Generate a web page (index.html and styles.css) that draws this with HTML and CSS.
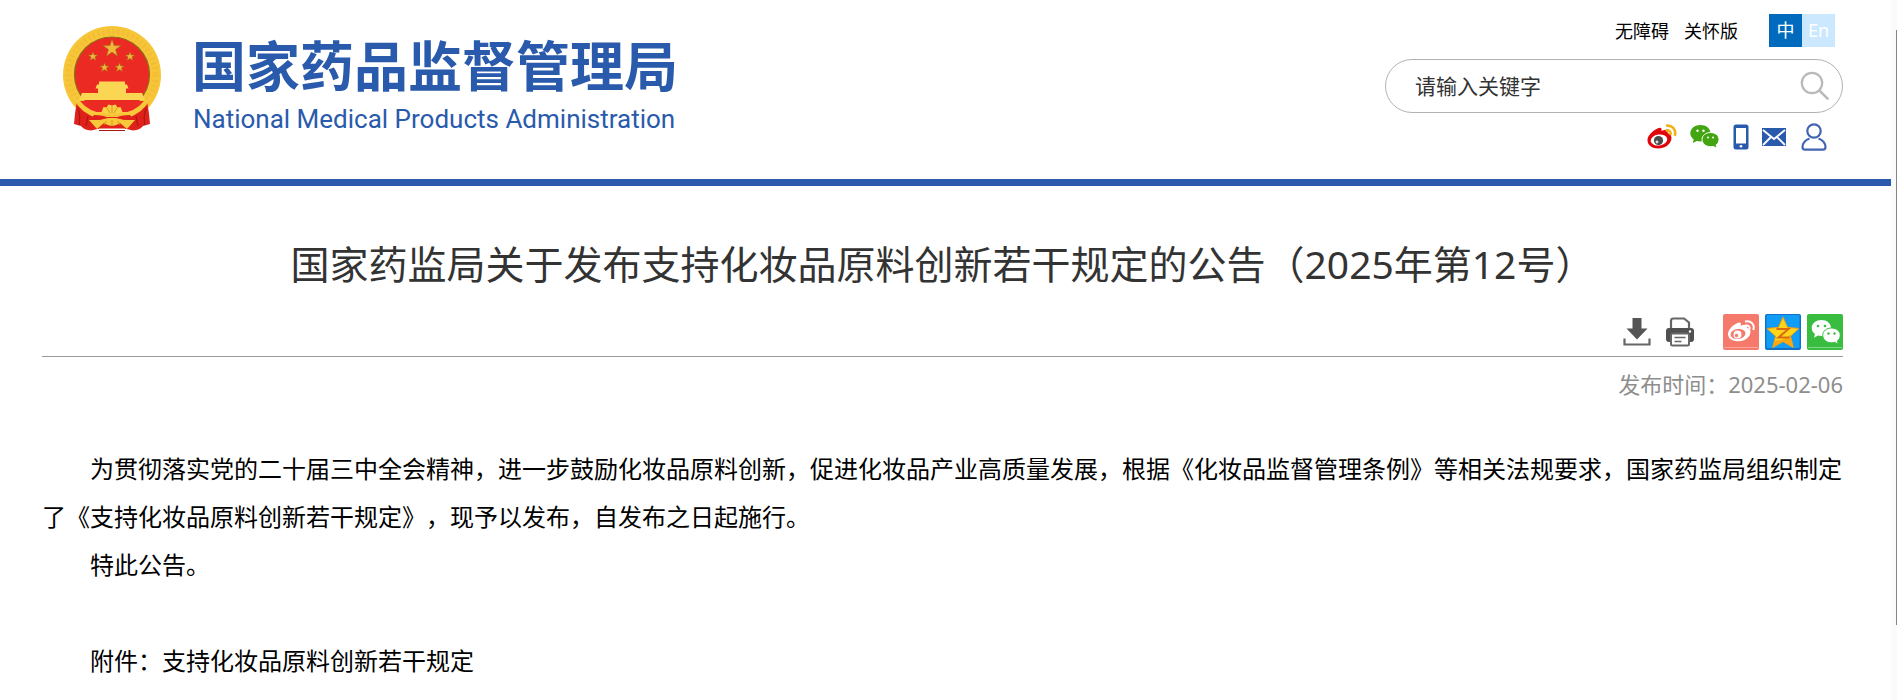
FILE: index.html
```
<!DOCTYPE html>
<html lang="zh-CN">
<head>
    <meta charset="UTF-8">
    <meta name="viewport" content="width=device-width, initial-scale=1.0">
    <title>国家药监局关于发布支持化妆品原料创新若干规定的公告(2025年第12号)</title>
    <link rel="stylesheet" href="styles.css">
</head>
<body>
    <div class="page">
        <header class="header">
            <a class="logo" href="#">
                <svg class="emblem" viewBox="0 0 98 106" aria-hidden="true">
                    <circle cx="49" cy="49" r="49" fill="#f7c638"/>
                    <circle cx="49" cy="49" r="43.500" fill="none" stroke="#e8a428" stroke-width="6" stroke-dasharray="2 3" opacity=".25"/>
                    <circle cx="49" cy="48.500" r="37.500" fill="#ec2a24" stroke="#8f6a16" stroke-width="1.200"/>
                    <g fill="#f0b83a" stroke="#a8701a" stroke-width=".6">
                        <path d="M49 13.500l2.100 6.100h6.900l-5.500 4 2 6.400-5.500-3.900-5.500 3.900 2-6.400-5.500-4h6.900z"/>
                        <path d="M30 26l1.200 3h3.300l-2.600 2 1 3.200-2.900-1.800-2.900 1.800 1-3.200-2.600-2h3.300z"/>
                        <path d="M67 26l1.200 3h3.300l-2.600 2 1 3.200-2.900-1.800-2.900 1.800 1-3.200-2.600-2h3.300z"/>
                        <path d="M41.500 37l1.200 3h3.300l-2.600 2 1 3.200-2.900-1.800-2.900 1.800 1-3.200-2.600-2h3.300z"/>
                        <path d="M56.500 37l1.200 3h3.300l-2.600 2 1 3.200-2.900-1.800-2.900 1.800 1-3.200-2.600-2h3.300z"/>
                    </g>
                    <path fill="#fbd653" d="M36 55.500h26v3h-26zM34 58.500h30l1.500 4h-33zM35 62.500h28v4.500h-28zM19 67h60l3 7h-66z"/>
                    <path fill="#ec2a24" d="M17 75h64q-4 7-12 11h-40q-8-4-12-11z"/>
                    <!-- ribbons -->
                    <path fill="#e0211b" d="M14 75q5 10 20 16h30q15-6 20-16 2 10 3 23l-7 2q-3 4-10 4.500l-9-2h-24l-9 2q-7-.5-10-4.500l-7-2q1-13 3-23z"/>
                    <path fill="none" stroke="#a91814" stroke-width="1.200" d="M15 82q3 10 1 17M83 82q-3 10-1 17M25 90l-2 10M73 90l2 10M36 104.500h26"/>
                    <!-- wheat stalks and gear -->
                    <path fill="#f7c93a" d="M9 69q4 4 8 6 9 11 23 12l-2 5h22l-2-5q14-1 23-12 4-2 8-6-5 13-16 19-6 4-12 4l2 2h9l-8 9-7-6q-8 6-16 0l-7 6-8-9h9l2-2q-6 0-12-4-11-6-16-19z"/>
                    <path fill="#f9cf46" d="M38.500 86l2-5 3 .5 2-3 3.500 1 3.500-1 2 3 3-.5 2 5-3.500 1.500h-14z"/>
                    <path fill="#e0211b" d="M31 89q10 0 14 3l-8 2-9-1zM67 89q-10 0-14 3l8 2 9-1z"/>
                    <path fill="none" stroke="#db981d" d="M44 82l3 5M54 82l-3 5M49 80v7M43 95l-2 4M49 94v6M55 95l2 4"/>
                </svg>
                <span class="logo-text">
                    <span class="logo-cn">国家药品监督管理局</span>
                    <span class="logo-en">National Medical Products Administration</span>
                </span>
            </a>
            <div class="tools">
                <nav class="top-links">
                    <a href="#">无障碍</a>
                    <a href="#">关怀版</a>
                    <span class="lang">
                        <a class="lang-cn" href="#">中</a><a class="lang-en" href="#">En</a>
                    </span>
                </nav>
                <form class="search">
                    <input type="text" placeholder="请输入关键字" aria-label="请输入关键字">
                    <button type="button" aria-label="搜索">
                        <svg width="30" height="30" viewBox="0 0 30 30" fill="none" stroke="#b9b9b9" stroke-width="2.200">
                            <circle cx="12" cy="12" r="10.200"/>
                            <path stroke-width="2.600" d="M19.300 19.300l9 9"/>
                        </svg>
                    </button>
                </form>
                <div class="social">
                    <a href="#" aria-label="微博">
                        <svg width="30" height="26" viewBox="0 0 30 26">
                            <path fill="#e0050b" d="M10.500 4.500c3-1.500 4.500-.5 4 2.500 3.500-1.500 7-1.300 6.200 2.300 3 .8 4.300 3 3.600 6.200-1 5-6.500 9-13 9-6 0-10.800-3-10.800-8.500 0-4 4.500-9 10-11.500z"/>
                            <ellipse cx="12" cy="16" rx="8.300" ry="5.500" fill="#fff" transform="rotate(-8 12 16)"/>
                            <circle cx="11.500" cy="16.500" r="4.600" fill="#4a4a4a"/>
                            <circle cx="10" cy="18" r="1.400" fill="#ddd"/>
                            <path fill="none" stroke="#f0b219" stroke-width="2.600" d="M19 1.800c6-1.200 10.500 3.500 8.800 10M18.500 6.500c4-.7 5.800 1.500 4.800 4.500"/>
                        </svg>
                    </a>
                    <a href="#" aria-label="微信">
                        <svg width="30" height="26" viewBox="0 0 30 26">
                            <path fill="#43a512" d="M10.500 1c5.500 0 10 3.500 10 8.300S16 17.500 10.500 17.500c-1.500 0-2.500-.2-3.700-.5l-4 2 .9-3.600C1.500 13.800.3 11.700.3 9.300.3 4.500 5 1 10.500 1z"/>
                            <path fill="#43a512" stroke="#fff" d="M20.500 8.500c4.700 0 8.500 3 8.500 7 0 2.200-1 4-2.800 5.300l.7 3.500-3.600-1.900c-.9.200-1.800.3-2.800.3-4.700 0-8.500-3.200-8.500-7.200s3.800-7 8.500-7z"/>
                            <g fill="#fff"><circle cx="7.500" cy="6.800" r="1.200"/><circle cx="13.500" cy="6.800" r="1.200"/><circle cx="18" cy="13.500" r="1"/><circle cx="23" cy="13.500" r="1"/></g>
                        </svg>
                    </a>
                    <a href="#" aria-label="手机">
                        <svg width="16" height="26" viewBox="0 0 16 26">
                            <rect x=".5" y=".5" width="15" height="25" rx="2.500" fill="#295aac"/>
                            <path fill="#fff" d="M3 4h10v15.500h-10z"/>
                            <circle cx="8" cy="22.300" r="1.300" fill="#fff"/>
                        </svg>
                    </a>
                    <a href="#" aria-label="邮箱">
                        <svg width="24" height="18" viewBox="0 0 24 18">
                            <path fill="#295aac" d="M0 0h24v18h-24z"/>
                            <path fill="none" stroke="#fff" stroke-width="1.800" d="M1 2l11 9 11-9M1 17l8-8M23 17l-8-8"/>
                        </svg>
                    </a>
                    <a href="#" aria-label="用户">
                        <svg width="28" height="28" viewBox="-2 0 28 28" fill="none" stroke="#4463b2" stroke-width="2.200">
                            <circle cx="13" cy="8" r="6.700"/>
                            <path d="M8.500 15.500c-4 1.500-6.800 4-7 8.500 0 1.800.8 2.700 2.500 2.700h18c1.700 0 2.500-.9 2.500-2.700-.2-4.500-3-7-7-8.500"/>
                        </svg>
                    </a>
                </div>
            </div>
        </header>

        <main class="article">
            <h1>国家药监局关于发布支持化妆品原料创新若干规定的公告（2025年第12号）</h1>
            <div class="actions">
                <button type="button" aria-label="下载">
                    <svg width="28" height="28" viewBox="0 0 28 28">
                        <path fill="#555" d="M9.500 0h9v10.500h6l-10.500 11-10.500-11h6z"/>
                        <path fill="none" stroke="#666" stroke-width="2.200" d="M1.500 20.500v6h25v-6"/>
                    </svg>
                </button>
                <button type="button" aria-label="打印">
                    <svg width="30" height="30" viewBox="0 0 30 30">
                        <path fill="none" stroke="#666" stroke-width="2.200" d="M6 11v-7q0-2.500 2.500-2.500h10.500l5 4v5.500"/>
                        <rect x="1" y="11" width="28" height="14" rx="3" fill="#505050"/>
                        <circle cx="25" cy="14.500" r="1.200" fill="#fff"/>
                        <rect x="6" y="16.500" width="18" height="12" rx="1.500" fill="#fff" stroke="#666" stroke-width="2"/>
                        <path stroke="#666" stroke-width="1.600" d="M9.500 20.500h11M9.500 24.500h7"/>
                    </svg>
                </button>
                <div class="share">
                    <a href="#" aria-label="分享到微博">
                        <svg width="36" height="36" viewBox="0 0 36 36">
                            <rect width="36" height="36" rx="2" fill="#f67a6b"/>
                            <path stroke="#fba79c" d="M1 33.500h34"/>
                            <path fill="#fff" d="M13.500 9.500c3.500-2 5-.8 4.300 2.200 4-1.600 7-1.200 6.200 2 3 1 4 3 3.300 5.500-1 4.500-6 8-12 8-5.500 0-10.300-2.500-10.300-7 0-3.700 4-8.700 8.500-10.700z"/>
                            <ellipse cx="15" cy="20" rx="7.500" ry="5" fill="#f67a6b" transform="rotate(-8 15 20)"/>
                            <circle cx="14.500" cy="20.500" r="4" fill="#fff"/>
                            <circle cx="13.500" cy="21.500" r="1.700" fill="#f67a6b"/>
                            <path fill="none" stroke="#fff" stroke-width="2" d="M22 7.500c6-1.500 10 3 8.300 8.500M22.500 11.500c3.200-.6 4.800 1.500 4 4"/>
                        </svg>
                    </a>
                    <a href="#" aria-label="分享到QQ空间">
                        <svg width="36" height="36" viewBox="0 0 36 36">
                            <rect width="36" height="36" rx="2" fill="#1470c4"/>
                            <rect x="1.500" y="1" width="33" height="33" rx="1" fill="#0f9df5"/>
                            <path fill="#ffd61a" stroke="#f09a10" d="M18 3l4.500 10.300 11.500 1.200-8.500 7.700 2.800 11.300-10.300-6-10.300 6 2.800-11.300-8.500-7.700 11.500-1.200z"/>
                            <path fill="#f7a813" d="M26 20l-.5 2.200 2.800 11.300-10.300-6-10.300 6 2-7q9 1 16.300-6.500z"/>
                            <path fill="none" stroke="#dc6a10" stroke-width="2" d="M11.500 15h12l-10 8.500h11"/>
                        </svg>
                    </a>
                    <a href="#" aria-label="分享到微信">
                        <svg width="36" height="36" viewBox="0 0 36 36">
                            <rect width="36" height="36" rx="2" fill="#38bd41"/>
                            <path stroke="#7fda86" d="M1 33.500h34"/>
                            <path fill="#fff" d="M14.500 6c5.300 0 9.500 3.500 9.500 8s-4.200 8-9.500 8c-1.300 0-2.300-.2-3.500-.5l-4 2.300 1-3.800c-2-1.500-3.300-3.500-3.300-6 0-4.500 4.500-8 9.800-8z"/>
                            <path fill="#fff" stroke="#38bd41" d="M24.500 14c5 0 8.800 3.200 8.800 7.300 0 2.300-1.200 4.200-2.800 5.500l.7 3.500-3.500-2c-1 .3-2 .5-3.200.5-5 0-8.800-3.300-8.800-7.500s3.800-7.300 8.800-7.300z"/>
                            <g fill="#38bd41"><circle cx="11" cy="12" r="1.300"/><circle cx="18" cy="12" r="1.300"/><circle cx="21.500" cy="19.500" r="1.200"/><circle cx="27.500" cy="19.500" r="1.200"/></g>
                        </svg>
                    </a>
                </div>
            </div>
            <p class="date">发布时间：2025-02-06</p>
            <div class="content">
                <p>为贯彻落实党的二十届三中全会精神，进一步鼓励化妆品原料创新，促进化妆品产业高质量发展，根据《化妆品监督管理条例》等相关法规要求，国家药监局组织制定了《支持化妆品原料创新若干规定》，现予以发布，自发布之日起施行。</p>
                <p>特此公告。</p>
                <p class="attachment">附件：<a href="#">支持化妆品原料创新若干规定</a></p>
            </div>
        </main>
    </div>
    <div class="scroll-track">
        <div class="scroll-thumb"></div>
    </div>
</body>
</html>
```
FILE: styles.css
```
* {
    box-sizing: border-box;
}
body {
    margin: 0;
    display: flex;
    min-height: 100vh;
    font-family: "Noto Sans", "Noto Sans CJK SC", sans-serif;
    text-spacing-trim: space-all;
    color: #000;
    background-color: #fff;
}
a {
    color: inherit;
    text-decoration: none;
}
svg {
    display: block;
}
button {
    padding: 0;
    border: 0;
    background: none;
    cursor: pointer;
}
.page {
    flex: 1;
    min-width: 0;
}

/* header */
.header {
    display: flex;
    justify-content: space-between;
    align-items: flex-start;
    height: 186px;
    padding: 14px 48px 0 63px;
    border-bottom: 7px solid #295aac;
}
.logo {
    display: flex;
    gap: 31px;
    padding-top: 12px;
    color: #295aac;
}
.emblem {
    width: 98px;
    height: 106px;
}
.logo-text {
    display: flex;
    flex-direction: column;
}
.logo-cn {
    font-size: 54px;
    font-weight: bold;
    line-height: 80px;
}
.logo-en {
    padding-left: 1px;
    font-family: Roboto, "Liberation Sans", sans-serif;
    font-size: 26px;
    line-height: 26px;
}
.tools {
    display: flex;
    flex-direction: column;
    width: 458px;
}
.top-links {
    display: flex;
    justify-content: flex-end;
    align-items: center;
    gap: 15px;
    padding-right: 8px;
    font-size: 18px;
    line-height: 32px;
}
.lang {
    display: flex;
    margin-left: 16px;
    color: #fff;
    text-align: center;
}
.lang a {
    width: 33px;
    height: 33px;
}
.lang-cn {
    background-color: #006bbd;
}
.lang-en {
    background-color: #cce8ff;
}
.search {
    display: flex;
    align-items: center;
    height: 54px;
    margin-top: 12px;
    padding: 0 12px 0 29px;
    border: 1px solid #b3b3b3;
    border-radius: 27px;
}
.search input {
    flex: 1;
    min-width: 0;
    padding: 0;
    border: 0;
    outline: 0;
    background: none;
    font-family: inherit;
    font-size: 21px;
}
.search input::placeholder {
    color: #333;
}
.social {
    display: flex;
    justify-content: flex-end;
    align-items: center;
    gap: 13px;
    margin-top: 10px;
    padding-right: 16px;
}

/* article */
.article {
    padding: 54px 48px 0 42px;
}
h1 {
    margin: 0;
    color: #333;
    font-size: 39px;
    font-weight: normal;
    line-height: 48px;
    text-align: center;
}
.actions {
    display: flex;
    justify-content: flex-end;
    align-items: center;
    gap: 14px;
    padding: 26px 0 6px;
    border-bottom: 1px solid #999;
}
.share {
    display: flex;
    gap: 6px;
    margin-left: 14px;
}
.date {
    margin: 11px 0 0;
    color: #8e8e8e;
    font-size: 22px;
    line-height: 32px;
    text-align: right;
}
.content {
    padding-top: 45px;
    font-size: 24px;
    line-height: 48px;
}
.content p {
    margin: 0;
    text-indent: 2em;
}
.content .attachment {
    margin-top: 48px;
}

/* scrollbar */
.scroll-track {
    width: 6px;
    padding-top: 30px;
    background-color: #fafafa;
}
.scroll-thumb {
    width: 1px;
    height: 85vh;
    margin-left: auto;
    background-color: #858585;
}
```
